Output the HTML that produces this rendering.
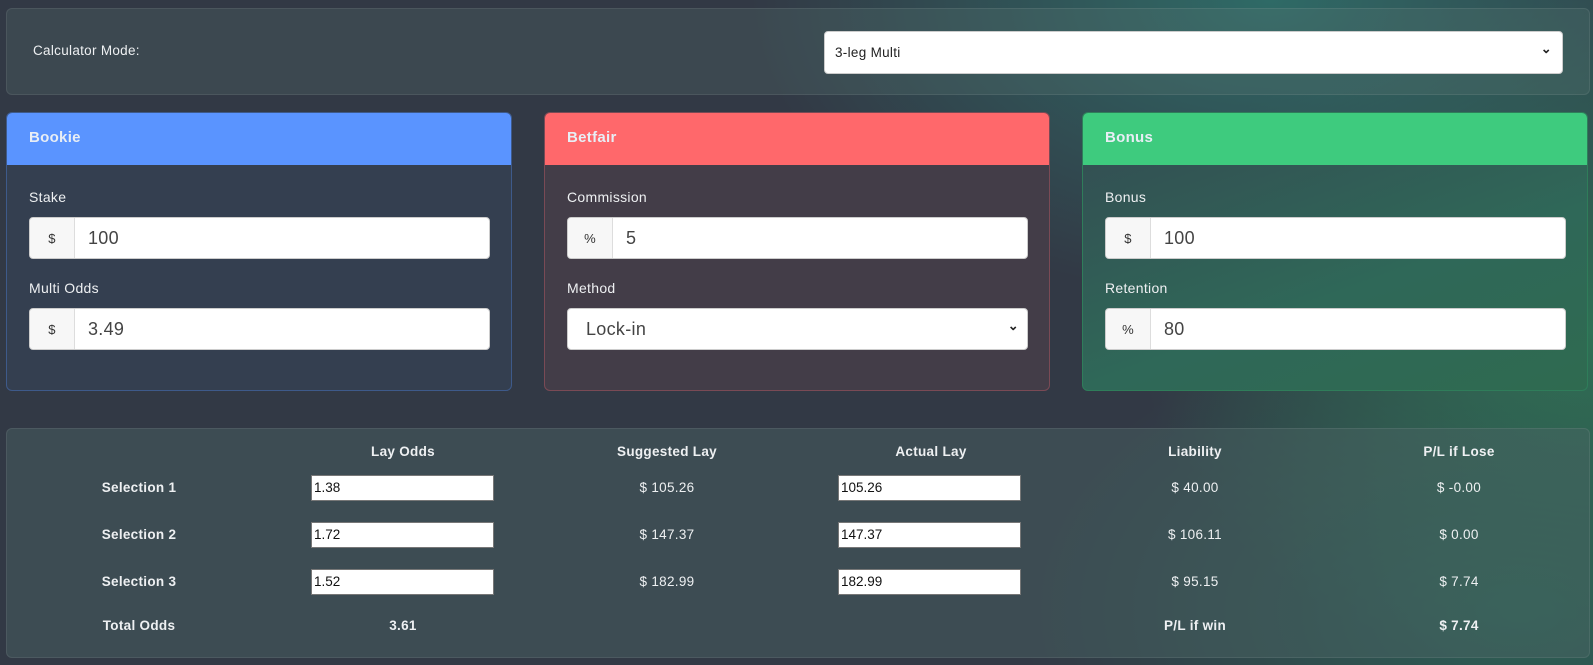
<!DOCTYPE html>
<html><head><style>
*{box-sizing:border-box;margin:0;padding:0}
body{width:1593px;height:665px;overflow:hidden;font-family:"Liberation Sans",sans-serif;color:#eef0f2;letter-spacing:0.3px;
background:radial-gradient(ellipse 520px 300px at 1270px 0px,#2f6a66 0%,rgba(47,106,102,0) 100%),radial-gradient(ellipse 450px 350px at 1590px 330px,#2f7055 0%,rgba(47,112,85,0) 100%),radial-gradient(ellipse 500px 300px at 1520px 610px,#2d5f55 0%,rgba(45,95,85,0) 100%),#323945;position:relative}
.panel{position:absolute;background:rgba(90,120,115,0.25);border:1px solid rgba(255,255,255,0.08);border-radius:6px}
.card{position:absolute;top:112px;width:506px;height:279px;border-radius:6px;overflow:hidden}
.hd{height:52px;padding:16px 22px;font-weight:bold;font-size:15px;color:#e8eef5}
.lbl{position:absolute;left:22px;font-size:14px}
.ig{position:absolute;left:22px;width:461px;height:42px;background:#fff;border:1px solid #ccc;border-radius:4px;display:flex}
.ig .a{width:45px;background:#f7f7f7;border-right:1px solid #ddd;color:#333;font-size:13px;display:flex;align-items:center;justify-content:center;border-radius:4px 0 0 4px}
.ig .v{padding-left:13px;font-size:18px;color:#444;display:flex;align-items:center}
.c{position:absolute;width:264px;text-align:center;font-size:13.5px}
.b{font-weight:bold}
.in{position:absolute;width:183px;height:26px;background:#fff;border:1px solid #777;color:#111;font-size:13.5px;padding:4px 2px;letter-spacing:0}
</style></head><body>
<div class="panel" style="left:6px;top:8px;width:1584px;height:87px">
<div style="position:absolute;left:26px;top:34px;font-size:13.5px">Calculator Mode:</div>
<div style="position:absolute;left:817px;top:22px;width:739px;height:43px;background:#fff;border:1px solid #ccc;border-radius:4px;color:#222;font-size:13.5px;padding:13px 10px">3-leg Multi<span style="position:absolute;right:10px;top:9px;font-size:13px;font-weight:bold">&#8964;</span></div>
</div>

<div class="card" style="left:6px;background:#343f50;border:1px solid #3e5a8a">
<div class="hd" style="background:#5a94ff">Bookie</div>
<div class="lbl" style="top:76px">Stake</div>
<div class="ig" style="top:104px"><div class="a">$</div><div class="v">100</div></div>
<div class="lbl" style="top:167px">Multi Odds</div>
<div class="ig" style="top:195px"><div class="a">$</div><div class="v">3.49</div></div>
</div>

<div class="card" style="left:544px;background:#433d48;border:1px solid #7a4a55">
<div class="hd" style="background:#ff686b">Betfair</div>
<div class="lbl" style="top:76px">Commission</div>
<div class="ig" style="top:104px"><div class="a">%</div><div class="v">5</div></div>
<div class="lbl" style="top:167px">Method</div>
<div class="ig" style="top:195px"><div class="v" style="padding-left:18px">Lock-in</div><span style="position:absolute;right:8px;top:9px;color:#222;font-size:13px;font-weight:bold">&#8964;</span></div>
</div>

<div class="card" style="left:1082px;background:linear-gradient(160deg,#344b52,#2f6858 60%,#2f6a50);border:1px solid #2f7d5a">
<div class="hd" style="background:#3ecb7e">Bonus</div>
<div class="lbl" style="top:76px">Bonus</div>
<div class="ig" style="top:104px"><div class="a">$</div><div class="v">100</div></div>
<div class="lbl" style="top:167px">Retention</div>
<div class="ig" style="top:195px"><div class="a">%</div><div class="v">80</div></div>
</div>

<div class="panel" style="left:6px;top:428px;width:1584px;height:230px;background:rgba(75,100,100,0.45)">
<div class="c b" style="left:264px;top:15px">Lay Odds</div>
<div class="c b" style="left:528px;top:15px">Suggested Lay</div>
<div class="c b" style="left:792px;top:15px">Actual Lay</div>
<div class="c b" style="left:1056px;top:15px">Liability</div>
<div class="c b" style="left:1320px;top:15px">P/L if Lose</div>

<div class="c b" style="left:0;top:51px">Selection 1</div>
<div class="in" style="left:304px;top:46px">1.38</div>
<div class="c" style="left:528px;top:51px">$ 105.26</div>
<div class="in" style="left:831px;top:46px">105.26</div>
<div class="c" style="left:1056px;top:51px">$ 40.00</div>
<div class="c" style="left:1320px;top:51px">$ -0.00</div>

<div class="c b" style="left:0;top:98px">Selection 2</div>
<div class="in" style="left:304px;top:93px">1.72</div>
<div class="c" style="left:528px;top:98px">$ 147.37</div>
<div class="in" style="left:831px;top:93px">147.37</div>
<div class="c" style="left:1056px;top:98px">$ 106.11</div>
<div class="c" style="left:1320px;top:98px">$ 0.00</div>

<div class="c b" style="left:0;top:145px">Selection 3</div>
<div class="in" style="left:304px;top:140px">1.52</div>
<div class="c" style="left:528px;top:145px">$ 182.99</div>
<div class="in" style="left:831px;top:140px">182.99</div>
<div class="c" style="left:1056px;top:145px">$ 95.15</div>
<div class="c" style="left:1320px;top:145px">$ 7.74</div>

<div class="c b" style="left:0;top:189px">Total Odds</div>
<div class="c b" style="left:264px;top:189px">3.61</div>
<div class="c b" style="left:1056px;top:189px">P/L if win</div>
<div class="c b" style="left:1320px;top:189px">$ 7.74</div>
</div>
</body></html>
